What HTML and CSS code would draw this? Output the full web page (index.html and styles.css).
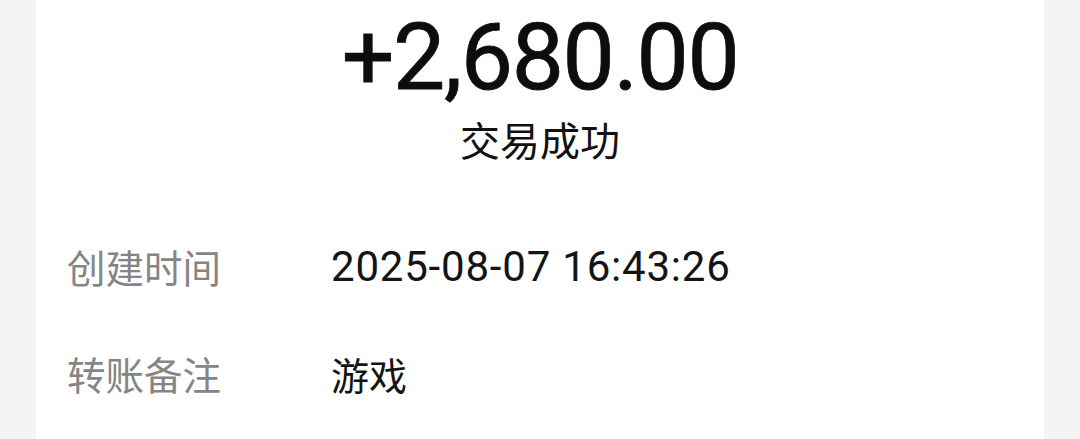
FILE: index.html
```html
<!DOCTYPE html>
<html lang="zh-CN">
<head>
<meta charset="utf-8">
<link rel="stylesheet" href="styles.css">
</head>
<body>
<div class="page">
  <main class="card">
    <section class="summary">
      <div class="amount">+2,680.00</div>
      <div class="status">交易成功</div>
    </section>
    <section class="details">
      <div class="row">
        <div class="label">创建时间</div>
        <div class="value num">2025-08-07 16:43:26</div>
      </div>
      <div class="row">
        <div class="label">转账备注</div>
        <div class="value">游戏</div>
      </div>
    </section>
  </main>
</div>
</body>
</html>
```

FILE: styles.css
```css
html, body {
  margin: 0;
  padding: 0;
  height: 100%;
  background: #f4f4f4;
}
.page {
  height: 100%;
  padding: 0 36px;
  box-sizing: border-box;
}
.card {
  background: #ffffff;
  height: 100%;
  font-family: "Noto Sans CJK SC", "Noto Sans", sans-serif;
}
.summary {
  display: flex;
  flex-direction: column;
  align-items: center;
  padding-top: 6px;
}
.amount {
  font-family: Roboto, "Noto Sans", sans-serif;
  font-size: 93px;
  line-height: 104px;
  letter-spacing: -1.4px;
  color: #0d0d0d;
  font-weight: 400;
  -webkit-text-stroke: 0.8px #0d0d0d;
}
.status {
  font-size: 40px;
  line-height: 52px;
  margin-top: 3px;
  color: #111;
}
.details {
  padding: 74px 0 0 31px;
  display: flex;
  flex-direction: column;
  gap: 53px;
}
.row {
  display: flex;
  align-items: center;
  height: 54px;
}
.label {
  width: 264px;
  font-size: 38.5px;
  color: #858585;
}
.value {
  font-size: 38px;
  color: #141414;
}
.value.num {
  font-family: Roboto, "Noto Sans", sans-serif;
  font-size: 42px;
  letter-spacing: 0.8px;
}
```
